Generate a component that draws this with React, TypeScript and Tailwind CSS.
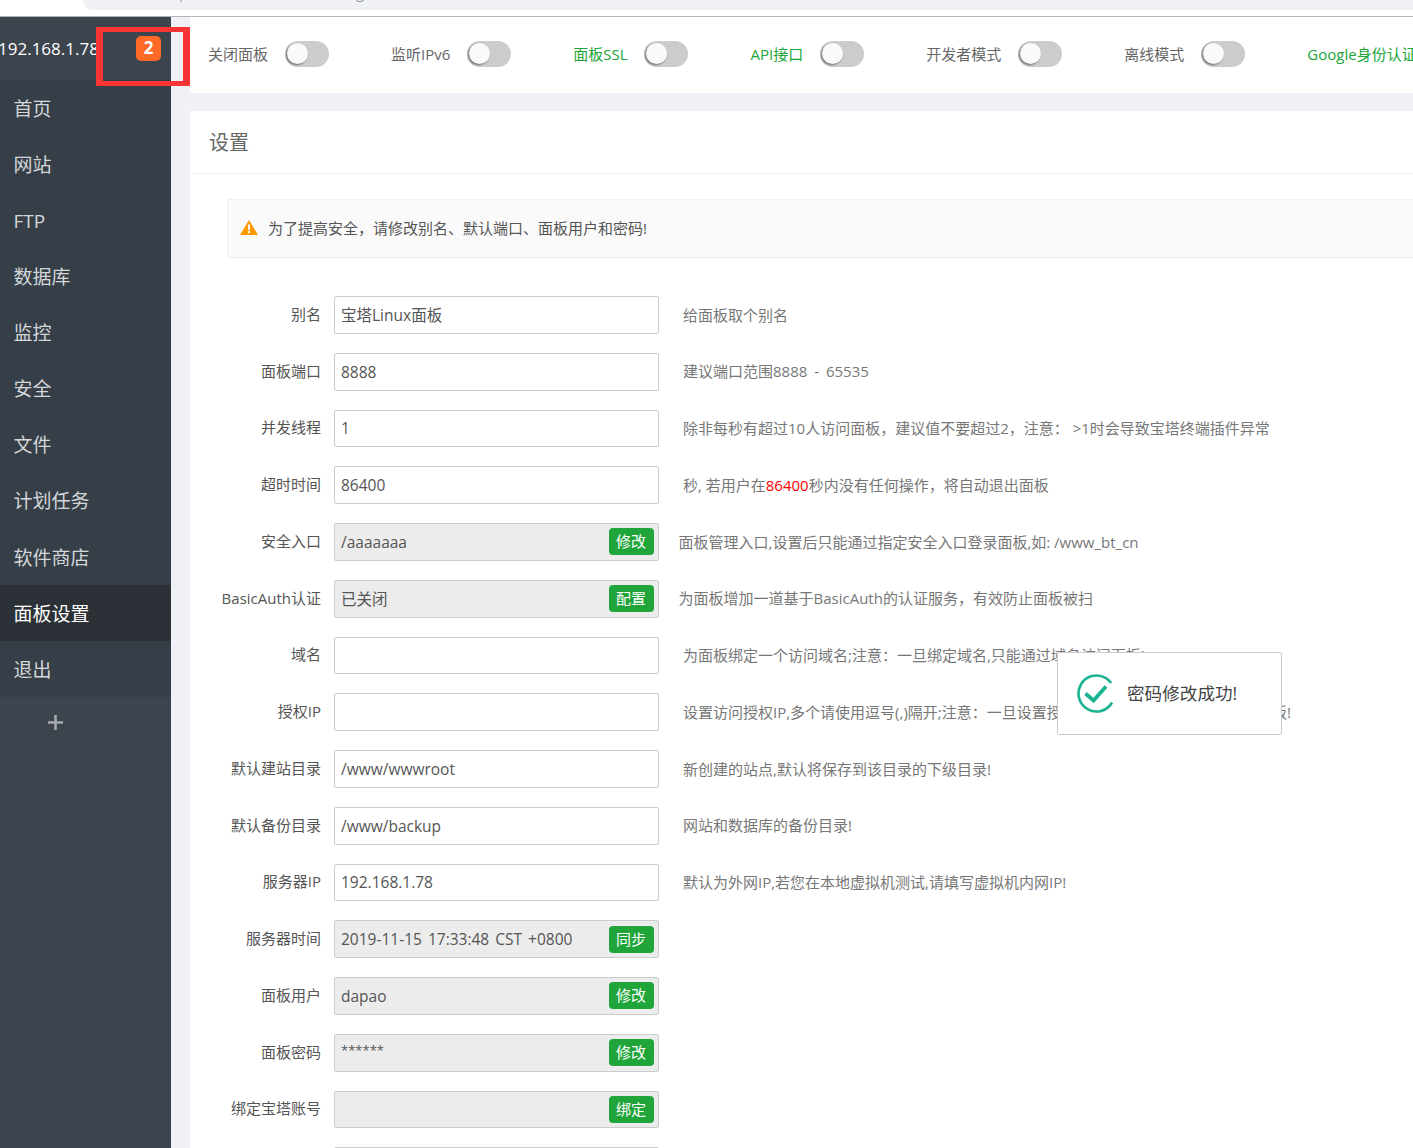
const font = { fontFamily: '"Open Sans", "Noto Sans CJK SC", sans-serif' };

const navItems = ['首页', '网站', 'FTP', '数据库', '监控', '安全', '文件', '计划任务', '软件商店', '面板设置', '退出'];

const toggles = [
  { label: '关闭面板' },
  { label: '监听IPv6' },
  { label: '面板SSL', green: true },
  { label: 'API接口', green: true },
  { label: '开发者模式' },
  { label: '离线模式' },
  { label: 'Google身份认证', green: true },
];

type Row = { label: string; value?: string; hint?: React.ReactNode; btn?: string };

const rows: Row[] = [
  { label: '别名', value: '宝塔Linux面板', hint: '给面板取个别名' },
  { label: '面板端口', value: '8888', hint: <>建议端口范围<span className="[word-spacing:3px]">8888 - 65535</span></> },
  { label: '并发线程', value: '1', hint: '除非每秒有超过10人访问面板，建议值不要超过2，注意： >1时会导致宝塔终端插件异常' },
  {
    label: '超时时间',
    value: '86400',
    hint: (
      <>
        秒, 若用户在<span className="text-[#ff0000]">86400</span>秒内没有任何操作，将自动退出面板
      </>
    ),
  },
  { label: '安全入口', value: '/aaaaaaa', btn: '修改', hint: '面板管理入口,设置后只能通过指定安全入口登录面板,如: /www_bt_cn' },
  { label: 'BasicAuth认证', value: '已关闭', btn: '配置', hint: '为面板增加一道基于BasicAuth的认证服务，有效防止面板被扫' },
  { label: '域名', hint: '为面板绑定一个访问域名;注意：一旦绑定域名,只能通过域名访问面板!' },
  { label: '授权IP', hint: '设置访问授权IP,多个请使用逗号(,)隔开;注意：一旦设置授权IP,只有指定IP的电脑能访问面板!' },
  { label: '默认建站目录', value: '/www/wwwroot', hint: '新创建的站点,默认将保存到该目录的下级目录!' },
  { label: '默认备份目录', value: '/www/backup', hint: '网站和数据库的备份目录!' },
  { label: '服务器IP', value: '192.168.1.78', hint: '默认为外网IP,若您在本地虚拟机测试,请填写虚拟机内网IP!' },
  { label: '服务器时间', value: '2019-11-15 17:33:48 CST +0800', btn: '同步' },
  { label: '面板用户', value: 'dapao', btn: '修改' },
  { label: '面板密码', value: '******', btn: '修改' },
  { label: '绑定宝塔账号', btn: '绑定' },
  { label: '', value: '' },
];

const Toggle = () => (
  <div className="relative w-[44px] h-[26px] rounded-full bg-[#cccccc] shrink-0">
    <div className="absolute left-[2px] top-[2px] w-[21px] h-[21px] rounded-full bg-[#fafafa] shadow-[-1px_1px_2px_rgba(0,0,0,0.5)]" />
  </div>
);

export default function App() {
  return (
    <div className="w-[1413px] h-[1148px] overflow-hidden flex flex-col bg-[#f0f1f6] text-[15px] text-[#555555]" style={font}>
      {/* browser strip, mostly cut off */}
      <div className="h-[17px] shrink-0 bg-white border-b border-[#b5b5b5] overflow-hidden">
        <div className="ml-[83px] h-[10px] bg-[#f0f1f4] rounded-bl-[12px] overflow-hidden">
          <div className="pl-[45px] -mt-[18px] text-[15px] leading-[20px] whitespace-nowrap">
            <span className="text-[#d93025]">不安全</span>
            <span className="text-[#999999]"> | 192.168.1.78:8888/config</span>
          </div>
        </div>
      </div>

      <div className="flex flex-1 min-h-0">
        {/* Sidebar */}
        <aside className="w-[171px] shrink-0 bg-[#3c444d]">
          <div className="h-[63px] relative">
            <span className="absolute left-[-2px] top-[19px] text-[17px] leading-[26px] text-white whitespace-nowrap">192.168.1.78</span>
            <span className="absolute left-[136px] top-[19px] w-[25px] h-[25px] rounded-[5px] bg-[#ff6a26] text-white text-[17px] leading-[24px] font-bold text-center">2</span>
          </div>
          <nav className="bg-[#363e47]">
            {navItems.map((item) => (
              <div
                key={item}
                className={`h-[56.1px] pl-[13.5px] pt-[2px] flex items-center text-[19px] ${item === '面板设置' ? 'bg-[#2c3138] text-white' : 'text-[#d3d7da]'}`}
              >
                {item}
              </div>
            ))}
          </nav>
          <div className="h-[50px] flex items-center pl-[47px]">
            <svg width="17" height="17" viewBox="0 0 17 17">
              <path d="M8.5 1v15M1 8.5h15" stroke="#a6a9ac" strokeWidth="2.6" fill="none" />
            </svg>
          </div>
        </aside>

        {/* Main */}
        <main className="flex-1 min-w-0 pl-[19px] flex flex-col">
          <div className="h-[76px] shrink-0 bg-white pl-[18px] pb-[3px] flex items-center gap-[62.5px] overflow-hidden whitespace-nowrap">
            {toggles.map((t) => (
              <div key={t.label} className="flex items-center gap-[16.5px] shrink-0">
                <span className={`pt-[2px] ${t.green ? 'text-[#20a53a]' : 'text-[#666666]'}`}>{t.label}</span>
                {t.label !== 'Google身份认证' && <Toggle />}
              </div>
            ))}
          </div>

          <div className="mt-[18px] flex-1 bg-white overflow-hidden">
            <div className="h-[63px] pl-[19px] pt-[2px] flex items-center text-[20px] text-[#666666] border-b border-[#eeeeee]">设置</div>

            <div className="ml-[37px] -mr-[10px] mt-[25px] h-[59px] bg-[#fafafa] border border-[#f0f0f0] flex items-center pl-[12px] gap-[10px] text-[#555555]">
              <svg width="18" height="15" viewBox="0 0 18 15" className="-mt-[2px]">
                <path d="M9 0 18 15H0z" fill="#ff9900" />
                <path d="M8 4.5h2v5.5H8zM8 11h2v2H8z" fill="#ffffff" />
              </svg>
              <span>为了提高安全，请修改别名、默认端口、面板用户和密码!</span>
            </div>

            <div className="mt-[38px]">
              {rows.map((r, i) => (
                <div key={i} className="flex items-center h-[37.75px] mb-[19px] whitespace-nowrap">
                  <label className="w-[131px] -mt-[1.5px] text-right text-[#555555]">{r.label}</label>
                  <div
                    className={`ml-[13px] w-[325px] h-full shrink-0 border border-[#cccccc] rounded-[2px] pl-[6px] pr-[4px] flex items-center justify-between text-[#555555] ${r.btn ? 'bg-[#ececec]' : 'bg-white'}`}
                  >
                    <span className={r.value === '******' ? 'text-[13px] -mt-[3px]' : 'text-[15.5px] pt-[1px] [word-spacing:2px]'}>{r.value}</span>
                    {r.btn && (
                      <button className="w-[45px] h-[27px] pr-[1px] rounded-[4px] bg-[#20a53a] text-white text-[15px] leading-none">{r.btn}</button>
                    )}
                  </div>
                  {r.hint && <span className={`${r.btn ? 'ml-[19.5px]' : 'ml-[24px]'} text-[#777777]`}>{r.hint}</span>}
                </div>
              ))}
            </div>
          </div>
        </main>
      </div>

      {/* toast */}
      <div className="fixed left-[1057px] top-[652px] w-[225px] h-[83px] bg-white border border-[#cccccc] rounded-[2px] flex items-center pl-[19px] gap-[11px]">
        <svg width="39" height="39" viewBox="0 0 39 39">
          <circle cx="19.5" cy="19.5" r="18" fill="none" stroke="#1ab394" strokeWidth="2.6" strokeDasharray="92 21" transform="rotate(30 19.5 19.5)" />
          <path d="M8.5 19.5l8 7L29 12.5" fill="none" stroke="#1ab394" strokeWidth="3.8" />
        </svg>
        <span className="text-[17.6px] text-[#444444]">密码修改成功!</span>
      </div>

      {/* red annotation box from the screenshot */}
      <div className="fixed left-[96px] top-[27px] w-[94px] h-[59px] border-x-[7px] border-y-[5px] border-[#f93434]" />
    </div>
  );
}
